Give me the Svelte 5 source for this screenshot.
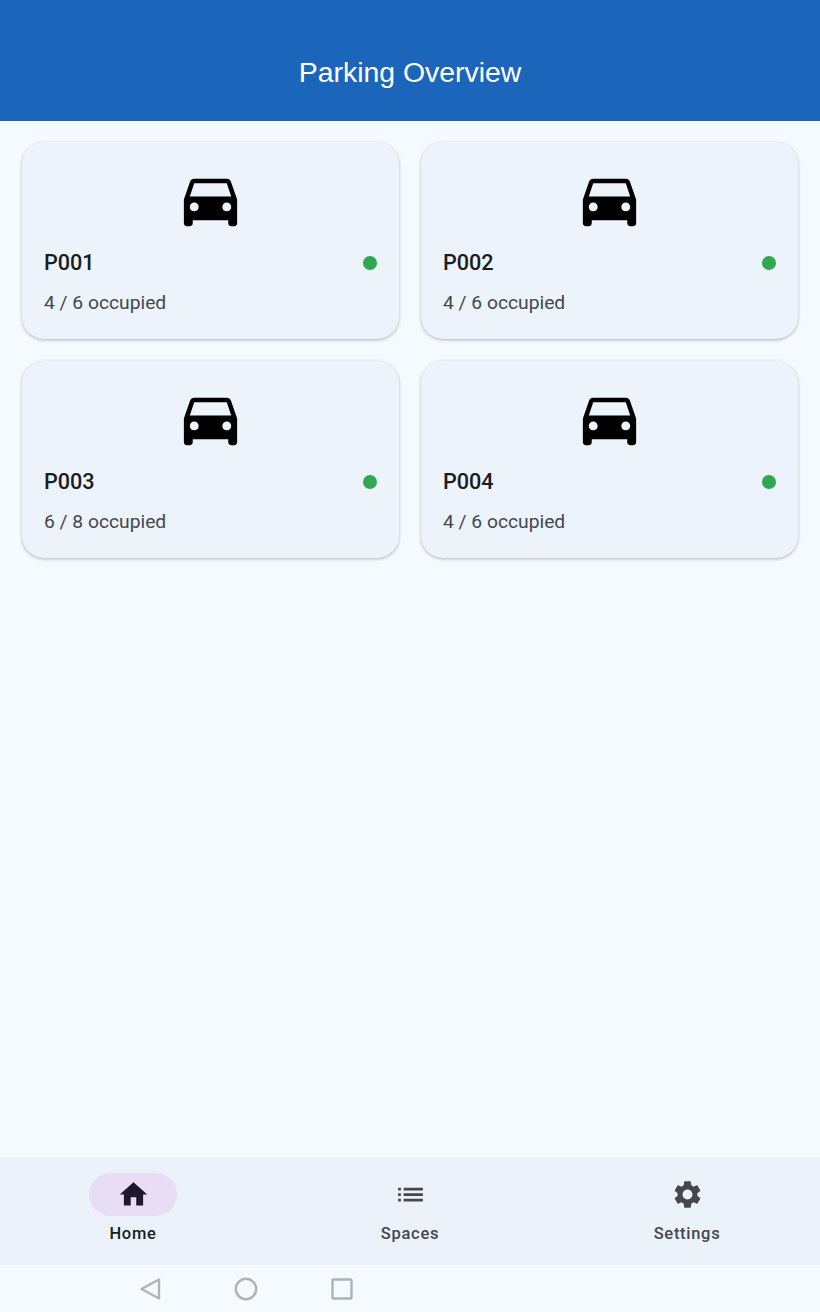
<script>
	const lots = [
		{ id: 'P001', used: 4, total: 6 },
		{ id: 'P002', used: 4, total: 6 },
		{ id: 'P003', used: 6, total: 8 },
		{ id: 'P004', used: 4, total: 6 }
	];

	const tabs = [
		{ label: 'Home', path: 'M10 20v-6h4v6h5v-8h3L12 3 2 12h3v8z' },
		{ label: 'Spaces', path: 'M3 13h2v-2H3v2zm0 4h2v-2H3v2zm0-8h2V7H3v2zm4 4h14v-2H7v2zm0 4h14v-2H7v2zM7 7v2h14V7H7z' },
		{
			label: 'Settings',
			path: 'M19.14 12.94c.04-.3.06-.61.06-.94 0-.32-.02-.64-.07-.94l2.03-1.58c.18-.14.23-.41.12-.61l-1.92-3.32c-.12-.22-.37-.29-.59-.22l-2.39.96c-.5-.38-1.03-.7-1.62-.94l-.36-2.54c-.04-.24-.24-.41-.48-.41h-3.84c-.24 0-.43.17-.47.41l-.36 2.54c-.59.24-1.13.57-1.62.94l-2.39-.96c-.22-.08-.47 0-.59.22L2.74 8.87c-.12.21-.08.47.12.61l2.03 1.58c-.05.3-.09.63-.09.94s.02.64.07.94l-2.03 1.58c-.18.14-.23.41-.12.61l1.92 3.32c.12.22.37.29.59.22l2.39-.96c.5.38 1.03.7 1.62.94l.36 2.54c.05.24.24.41.48.41h3.84c.24 0 .44-.17.47-.41l.36-2.54c.59-.24 1.13-.56 1.62-.94l2.39.96c.22.08.47 0 .59-.22l1.92-3.32c.12-.22.07-.47-.12-.61l-2.01-1.58zM12 15.6c-1.98 0-3.6-1.62-3.6-3.6s1.62-3.6 3.6-3.6 3.6 1.62 3.6 3.6-1.62 3.6-3.6 3.6z'
		}
	];

	const car = 'M18.92 6.01C18.72 5.42 18.16 5 17.5 5h-11c-.66 0-1.21.42-1.42 1.01L3 12v8c0 .55.45 1 1 1h1c.55 0 1-.45 1-1v-1h12v1c0 .55.45 1 1 1h1c.55 0 1-.45 1-1v-8l-2.08-5.99zM6.5 16c-.83 0-1.5-.67-1.5-1.5S5.67 13 6.5 13s1.5.67 1.5 1.5S7.33 16 6.5 16zm11 0c-.83 0-1.5-.67-1.5-1.5s.67-1.5 1.5-1.5 1.5.67 1.5 1.5-.67 1.5-1.5 1.5zM5 11l1.5-4.5h11L19 11H5z';
</script>

<div class="screen">
	<header class="app-bar">
		<h1>Parking Overview</h1>
	</header>

	<main class="grid">
		{#each lots as lot}
			<div class="card">
				<svg class="car" viewBox="0 0 24 24"><path d={car} /></svg>
				<div class="row">
					<span class="name">{lot.id}</span>
					<span class="dot"></span>
				</div>
				<div class="count">{lot.used} / {lot.total} occupied</div>
			</div>
		{/each}
	</main>

	<nav class="tabs">
		{#each tabs as tab, i}
			<div class="tab" class:active={i === 0}>
				<span class="pill">
					<svg viewBox="0 0 24 24"><path d={tab.path} /></svg>
				</span>
				<span class="label">{tab.label}</span>
			</div>
		{/each}
	</nav>

	<div class="system">
		<svg width="22" height="24" viewBox="0 0 22 24"><path d="M20 2.5v19L2.5 12z" /></svg>
		<svg width="24" height="24" viewBox="0 0 24 24"><circle cx="12" cy="12" r="10.2" /></svg>
		<svg width="22" height="22" viewBox="0 0 22 22"><rect x="1.5" y="1.5" width="19" height="19" rx="1" /></svg>
	</div>
</div>

<style>
	:global(body) {
		background: #f5faff;
	}

	.screen {
		display: flex;
		flex-direction: column;
		height: 1312px;
		background: #f5faff;
		font-family: Roboto, sans-serif;
	}

	.app-bar {
		flex: none;
		height: 121px;
		box-sizing: border-box;
		padding-top: 54px;
		background: #1b65bb;
		text-align: center;
	}

	.app-bar h1 {
		margin: 0;
		font: 400 28.4px/36px "Liberation Sans", Arial, sans-serif;
		color: #fff;
	}

	.grid {
		flex: 1;
		display: grid;
		grid-template-columns: 1fr 1fr;
		grid-auto-rows: 197px;
		gap: 22px;
		align-content: start;
		padding: 21px 22px;
	}

	.card {
		box-sizing: border-box;
		display: flex;
		flex-direction: column;
		padding: 22px;
		background: #edf3fb;
		border-radius: 22px;
		box-shadow: 0 1px 3px rgba(0, 0, 0, 0.22), 0 1px 4px rgba(0, 0, 0, 0.08);
	}

	.car {
		align-self: center;
		width: 71px;
		height: 71px;
		flex: none;
	}

	.row {
		display: flex;
		align-items: center;
		justify-content: space-between;
		margin-top: 12px;
		height: 30px;
	}

	.name {
		font-size: 21.6px;
		font-weight: 500;
		color: #191c20;
	}

	.dot {
		width: 14px;
		height: 14px;
		margin-top: 1px;
		border-radius: 50%;
		background: #2fa84f;
	}

	.count {
		margin-top: 12px;
		font-size: 19.25px;
		line-height: 27px;
		color: #43474e;
	}

	.tabs {
		flex: none;
		height: 108px;
		display: grid;
		grid-template-columns: repeat(3, 1fr);
		gap: 11px;
		background: #ebf2fa;
	}

	.tab {
		display: flex;
		flex-direction: column;
		align-items: center;
		padding-top: 16px;
	}

	.pill {
		display: flex;
		align-items: center;
		justify-content: center;
		width: 88px;
		height: 43px;
		border-radius: 22px;
	}

	.pill svg {
		width: 33px;
		height: 33px;
		fill: #44474f;
	}

	.label {
		margin-top: 6px;
		font-size: 16.5px;
		font-weight: 500;
		line-height: 24px;
		letter-spacing: 0.7px;
		color: #44474f;
	}

	.active .pill {
		background: #e9ddf5;
	}

	.active .pill svg {
		fill: #1d192b;
	}

	.active .label {
		color: #191c20;
	}

	.system {
		flex: none;
		height: 47px;
		display: flex;
		align-items: center;
		gap: 73px;
		padding-left: 139px;
	}

	.system svg {
		fill: none;
		stroke: #b0b2b4;
		stroke-width: 2.4;
		stroke-linejoin: round;
	}
</style>
